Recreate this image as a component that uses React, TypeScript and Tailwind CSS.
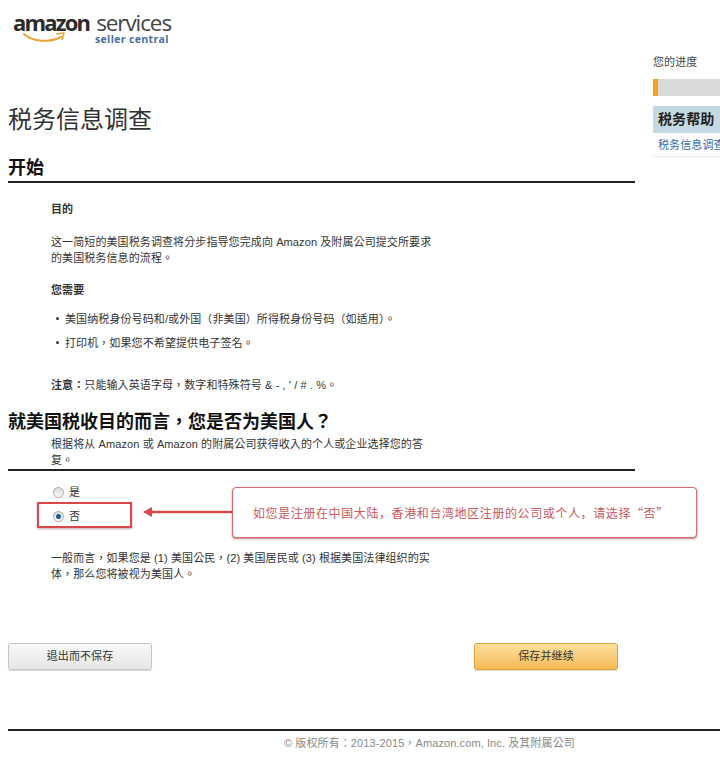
import React from "react";

const cjk = "font-['Liberation_Sans','Noto_Sans_CJK_TC',sans-serif]";

const Logo: React.FC = () => (
  <div className="relative h-[44px] w-[165px] text-[#2b2b2b]">
    <div className="flex h-[22px] items-baseline leading-none font-['Open_Sans',sans-serif]">
      <span className="text-[22px] font-bold tracking-[-1.8px]">amazon</span>
      <span className="ml-[7px] text-[22.5px] tracking-[-1.1px] text-[#444]">services</span>
    </div>
    <svg className="absolute left-[10px] top-[20px]" width="44" height="16" viewBox="0 0 44 16" fill="none">
      <path d="M1 3 C10 11 26 12 38 6" stroke="#e8a33a" strokeWidth="2" strokeLinecap="round" />
      <path d="M33 3 L41 2 L39 9" stroke="#e8a33a" strokeWidth="1.6" strokeLinejoin="round" />
    </svg>
    <span className="absolute left-[82px] top-[23px] text-[10.5px] leading-none font-bold tracking-[0.35px] text-[#4a6f9c] font-['Open_Sans',sans-serif]">
      seller central
    </span>
  </div>
);

const Radio: React.FC<{ checked?: boolean }> = ({ checked }) => (
  <span className="flex h-[11px] w-[11px] items-center justify-center rounded-full border border-[#a9a9a9] bg-gradient-to-b from-[#d9d9d9] to-[#fafafa]">
    {checked && <span className="h-[5px] w-[5px] rounded-full bg-[#1d5a96]" />}
  </span>
);

export default function App() {
  return (
    <div className={`${cjk} relative h-[767px] w-[720px] overflow-hidden bg-white text-[11px] tracking-[0.1px] text-[#333]`}>
      <header className="h-[53px] pl-[13px] pt-[11px]">
        <Logo />
      </header>

      <div className="flex">
        <main className="w-[627px] ml-[8px] shrink-0">
          <h1 className="mt-[50px] text-[24px] leading-[34px] font-normal tracking-normal text-[#333]">税务信息调查</h1>
          <h2 className="mt-[18px] border-b-2 border-[#222] text-[18px] leading-[26px] font-bold tracking-normal text-[#111]">开始</h2>

          <section className="ml-[43px] w-[385px] leading-[16px]">
            <p className="mt-[18px] font-bold">目的</p>
            <p className="mt-[17px]">这一简短的美国税务调查将分步指导您完成向 Amazon 及附属公司提交所要求的美国税务信息的流程。</p>
            <p className="mt-[16px] font-bold">您需要</p>
            <ul className="mt-[12px]">
              <li className="flex items-center gap-[6px] h-[17px] ml-[5px] whitespace-nowrap">
                <span className="h-[3px] w-[3px] rounded-full bg-[#333]" />
                美国纳税身份号码和/或外国（非美国）所得税身份号码（如适用）。
              </li>
              <li className="mt-[7px] flex items-center gap-[6px] h-[17px] ml-[5px] whitespace-nowrap">
                <span className="h-[3px] w-[3px] rounded-full bg-[#333]" />
                打印机，如果您不希望提供电子签名。
              </li>
            </ul>
            <p className="mt-[26px] whitespace-nowrap"><b>注意：</b>只能输入英语字母，数字和特殊符号 &amp; - , ' / # . %。</p>
          </section>

          <h2 className="mt-[17px] text-[18px] leading-[24px] font-bold tracking-normal text-[#111]">就美国税收目的而言，您是否为美国人？</h2>
          <div className="border-b-2 border-[#222] pb-[1px]">
            <p className="ml-[43px] mt-[2px] w-[375px] leading-[16px]">根据将从 Amazon 或 Amazon 的附属公司获得收入的个人或企业选择您的答复。</p>
          </div>

          <div className="ml-[45px] mt-[14px] flex flex-col gap-[10px]">
            <label className="flex h-[14px] items-center gap-[5px]"><Radio />是</label>
            <label className="flex h-[14px] items-center gap-[5px]"><Radio checked />否</label>
          </div>

          <p className="ml-[43px] mt-[27px] w-[385px] leading-[16px]">一般而言，如果您是 (1) 美国公民，(2) 美国居民或 (3) 根据美国法律组织的实体，那么您将被视为美国人。</p>

          <div className="mt-[61px] flex justify-between pr-[17px]">
            <button className="h-[27px] w-[144px] rounded-[3px] border border-[#c4c4c4] bg-gradient-to-b from-[#f8f8f8] to-[#e6e6e6] text-[#333] shadow-[0_1px_1px_rgba(0,0,0,0.15)]">退出而不保存</button>
            <button className="h-[27px] w-[144px] rounded-[3px] border border-[#e0a040] bg-gradient-to-b from-[#fbe09a] to-[#f3bb55] text-[#333] shadow-[0_1px_1px_rgba(0,0,0,0.15)]">保存并继续</button>
          </div>
        </main>

        <aside className="ml-[18px] w-[120px] shrink-0 pt-[2px]">
          <p className="leading-[14px] text-[#444]">您的进度</p>
          <div className="mt-[10px] h-[17px] w-full bg-[#d9d9d9]">
            <div className="h-full w-[5px] bg-[#f3a01f]" />
          </div>
          <div className="mt-[10px] h-[27px] bg-[#c5d9e4] pl-[5px] text-[14px] leading-[27px] font-bold text-[#222] whitespace-nowrap">税务帮助</div>
          <div className="h-[24px] border-b border-[#eeeeee] bg-white pl-[5px] leading-[24px] text-[#2a6fa8] whitespace-nowrap">税务信息调查</div>
        </aside>
      </div>

      <footer className="absolute left-[8px] right-0 top-[729px] border-t-2 border-[#222] pt-[4px] pl-[276px] text-[#888]">
        © 版权所有：2013-2015，Amazon.com, Inc. 及其附属公司
      </footer>

      {/* annotations drawn over the screenshot */}
      <div className="absolute left-[37px] top-[502px] h-[26px] w-[95px] border-[2.5px] border-[#d9474a] shadow-[0_1px_2px_rgba(120,40,40,0.4)]" />
      <svg className="absolute left-[142px] top-[504px]" width="92" height="16" viewBox="0 0 92 16" fill="none">
        <path d="M8 8 H91" stroke="#d9474a" strokeWidth="2.5" />
        <path d="M1 8 L10 3 L10 13 Z" fill="#d9474a" />
      </svg>
      <div className="absolute left-[232px] top-[487px] flex h-[51px] w-[465px] items-center rounded-[4px] border border-[#d9696b] bg-white pl-[20px] font-['Noto_Sans_CJK_SC',sans-serif] text-[12px] tracking-[0.6px] text-[#c9575a] shadow-[0_1px_2px_rgba(120,40,40,0.6)] whitespace-nowrap">
        如您是注册在中国大陆，香港和台湾地区注册的公司或个人，请选择“否”
      </div>
    </div>
  );
}
